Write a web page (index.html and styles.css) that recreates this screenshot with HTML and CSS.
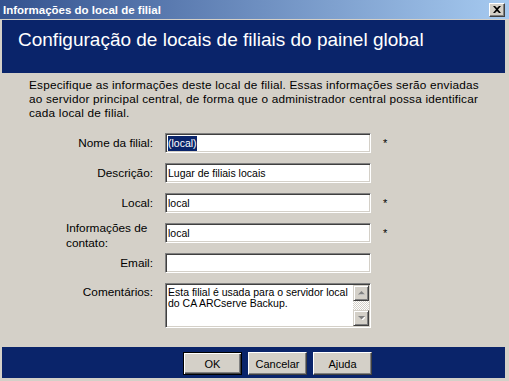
FILE: index.html
```html
<!DOCTYPE html>
<html lang="pt">
<head>
    <meta charset="UTF-8">
    <title>Informações do local de filial</title>
    <link rel="stylesheet" href="styles.css">
</head>
<body>
<div class="window">
    <div class="titlebar">
        <span>Informações do local de filial</span>
        <button class="close-button" type="button">
            <svg width="8" height="7" viewBox="0 0 8 7"><path d="M0 0h2l2 2 2-2h2L5 3.5 8 7H6L4 5 2 7H0l3-3.5z" fill="#000"/></svg>
        </button>
    </div>
    <div class="client">
        <div class="banner">
            <h1>Configuração de locais de filiais do painel global</h1>
        </div>
        <div class="content">
            <p class="intro">Especifique as informações deste local de filial. Essas informações serão enviadas<br>ao servidor principal central, de forma que o administrador central possa identificar<br>cada local de filial.</p>
            <div class="form">
                <label class="label">Nome da filial:</label>
                <div class="field"><span class="selected">(local)</span></div>
                <span class="req">*</span>

                <label class="label">Descrição:</label>
                <div class="field">Lugar de filiais locais</div>
                <span></span>

                <label class="label">Local:</label>
                <div class="field">local</div>
                <span class="req">*</span>

                <label class="label label-wrap">Informações de contato:</label>
                <div class="field">local</div>
                <span class="req">*</span>

                <label class="label">Email:</label>
                <div class="field"></div>
                <span></span>

                <label class="label label-top">Comentários:</label>
                <div class="memo">
                    <div class="memo-text">Esta filial é usada para o servidor local<br>do CA ARCserve Backup.</div>
                    <div class="scrollbar">
                        <div class="scroll-button">
                            <svg width="7" height="4" viewBox="0 0 7 4"><path d="M4 1l3 3H1z" fill="#fff"/><path d="M3.5 0L7 3.5H0z" fill="#808080"/></svg>
                        </div>
                        <div class="scroll-track"></div>
                        <div class="scroll-button">
                            <svg width="7" height="4" viewBox="0 0 7 4"><path d="M1 1h7L4.5 4.5z" fill="#fff"/><path d="M0 0h7L3.5 3.5z" fill="#808080"/></svg>
                        </div>
                    </div>
                </div>
                <span></span>
            </div>
        </div>
        <div class="footer">
            <button type="button" class="button default">OK</button>
            <button type="button" class="button">Cancelar</button>
            <button type="button" class="button">Ajuda</button>
        </div>
    </div>
</div>
</body>
</html>
```

FILE: styles.css
```css
body {
    margin: 0;
    padding: 0;
    font-family: "Liberation Sans", Arial, sans-serif;
    font-size: 11px;
    background-color: #d4d0c8;
}
.window {
    width: 509px;
    height: 381px;
    display: flex;
    flex-direction: column;
    background-color: #d4d0c8;
    overflow: hidden;
}
.titlebar {
    flex: none;
    height: 19px;
    display: flex;
    align-items: center;
    justify-content: space-between;
    padding: 0 4px 0 3px;
    background: linear-gradient(to right, #34528f, #a6caf0);
    color: white;
    font-weight: bold;
    font-size: 11.5px;
}
.close-button {
    width: 16px;
    height: 14px;
    padding: 0;
    display: flex;
    align-items: center;
    justify-content: center;
    background-color: #d4d0c8;
    border: 1px solid;
    border-color: #fff #404040 #404040 #fff;
    box-shadow: inset -1px -1px #808080;
}
.client {
    flex: 1;
    margin: 1px 4px 3px 2px;
    display: flex;
    flex-direction: column;
}
.banner {
    flex: none;
    height: 53px;
    box-sizing: border-box;
    padding: 9px 0 0 16px;
    background-color: #0a246a;
    color: white;
}
.banner h1 {
    margin: 0;
    font-weight: normal;
    font-size: 19px;
    line-height: 22px;
}
.content {
    flex: 1;
    padding: 5px 0 0 27px;
}
.intro {
    margin: 0;
    font-size: 11.8px;
    letter-spacing: 0.2px;
    line-height: 14px;
    color: black;
    white-space: nowrap;
}
.form {
    display: grid;
    grid-template-columns: 87px 206px auto;
    grid-template-rows: repeat(5, 20px) 45px;
    column-gap: 12px;
    row-gap: 10px;
    margin: 13px 0 0 37px;
}
.label {
    align-self: center;
    text-align: right;
    font-size: 11.8px;
    line-height: 14px;
}
.label-wrap {
    align-self: start;
    text-align: left;
    line-height: 15px;
    margin-top: -2px;
}
.label-top {
    align-self: start;
    margin-top: 2px;
}
.field, .memo {
    box-sizing: border-box;
    background-color: white;
    border: 1px solid;
    border-color: #808080 #fff #fff #808080;
    box-shadow: inset 1px 1px #404040, inset -1px -1px #d4d0c8;
    font-size: 10.5px;
}
.field {
    height: 20px;
    padding: 1px 2px 0;
    line-height: 17px;
    white-space: nowrap;
}
.selected {
    background-color: #0a246a;
    color: white;
    padding: 1px 0 2px;
}
.req {
    align-self: center;
    font-size: 11px;
    margin-top: -1px;
}
.memo {
    height: 45px;
    display: flex;
    padding: 1px;
}
.memo-text {
    flex: 1;
    padding: 2px 0 0 1px;
    line-height: 11px;
    white-space: nowrap;
}
.scrollbar {
    width: 16px;
    display: flex;
    flex-direction: column;
}
.scroll-button {
    width: 16px;
    height: 16px;
    box-sizing: border-box;
    display: flex;
    align-items: center;
    justify-content: center;
    background-color: #d4d0c8;
    border: 1px solid;
    border-color: #d4d0c8 #404040 #404040 #d4d0c8;
    box-shadow: inset 1px 1px #fff, inset -1px -1px #808080;
}
.scroll-track {
    flex: 1;
    background: repeating-conic-gradient(#fff 0 25%, #d4d0c8 0 50%) 0 0 / 2px 2px;
}
.footer {
    flex: none;
    height: 31px;
    box-sizing: border-box;
    padding: 5px 0 0 181px;
    display: flex;
    gap: 6px;
    background-color: #0a246a;
}
.button {
    width: 59px;
    height: 23px;
    box-sizing: border-box;
    padding: 0;
    background-color: #d4d0c8;
    border: 1px solid;
    border-color: #fff #404040 #404040 #fff;
    box-shadow: inset -1px -1px #808080;
    font-family: "Liberation Sans", Arial, sans-serif;
    font-size: 11px;
    color: black;
}
.button.default {
    border-color: #000;
    box-shadow: inset 1px 1px #fff, inset -1px -1px #404040, inset -2px -2px #808080;
}
```
